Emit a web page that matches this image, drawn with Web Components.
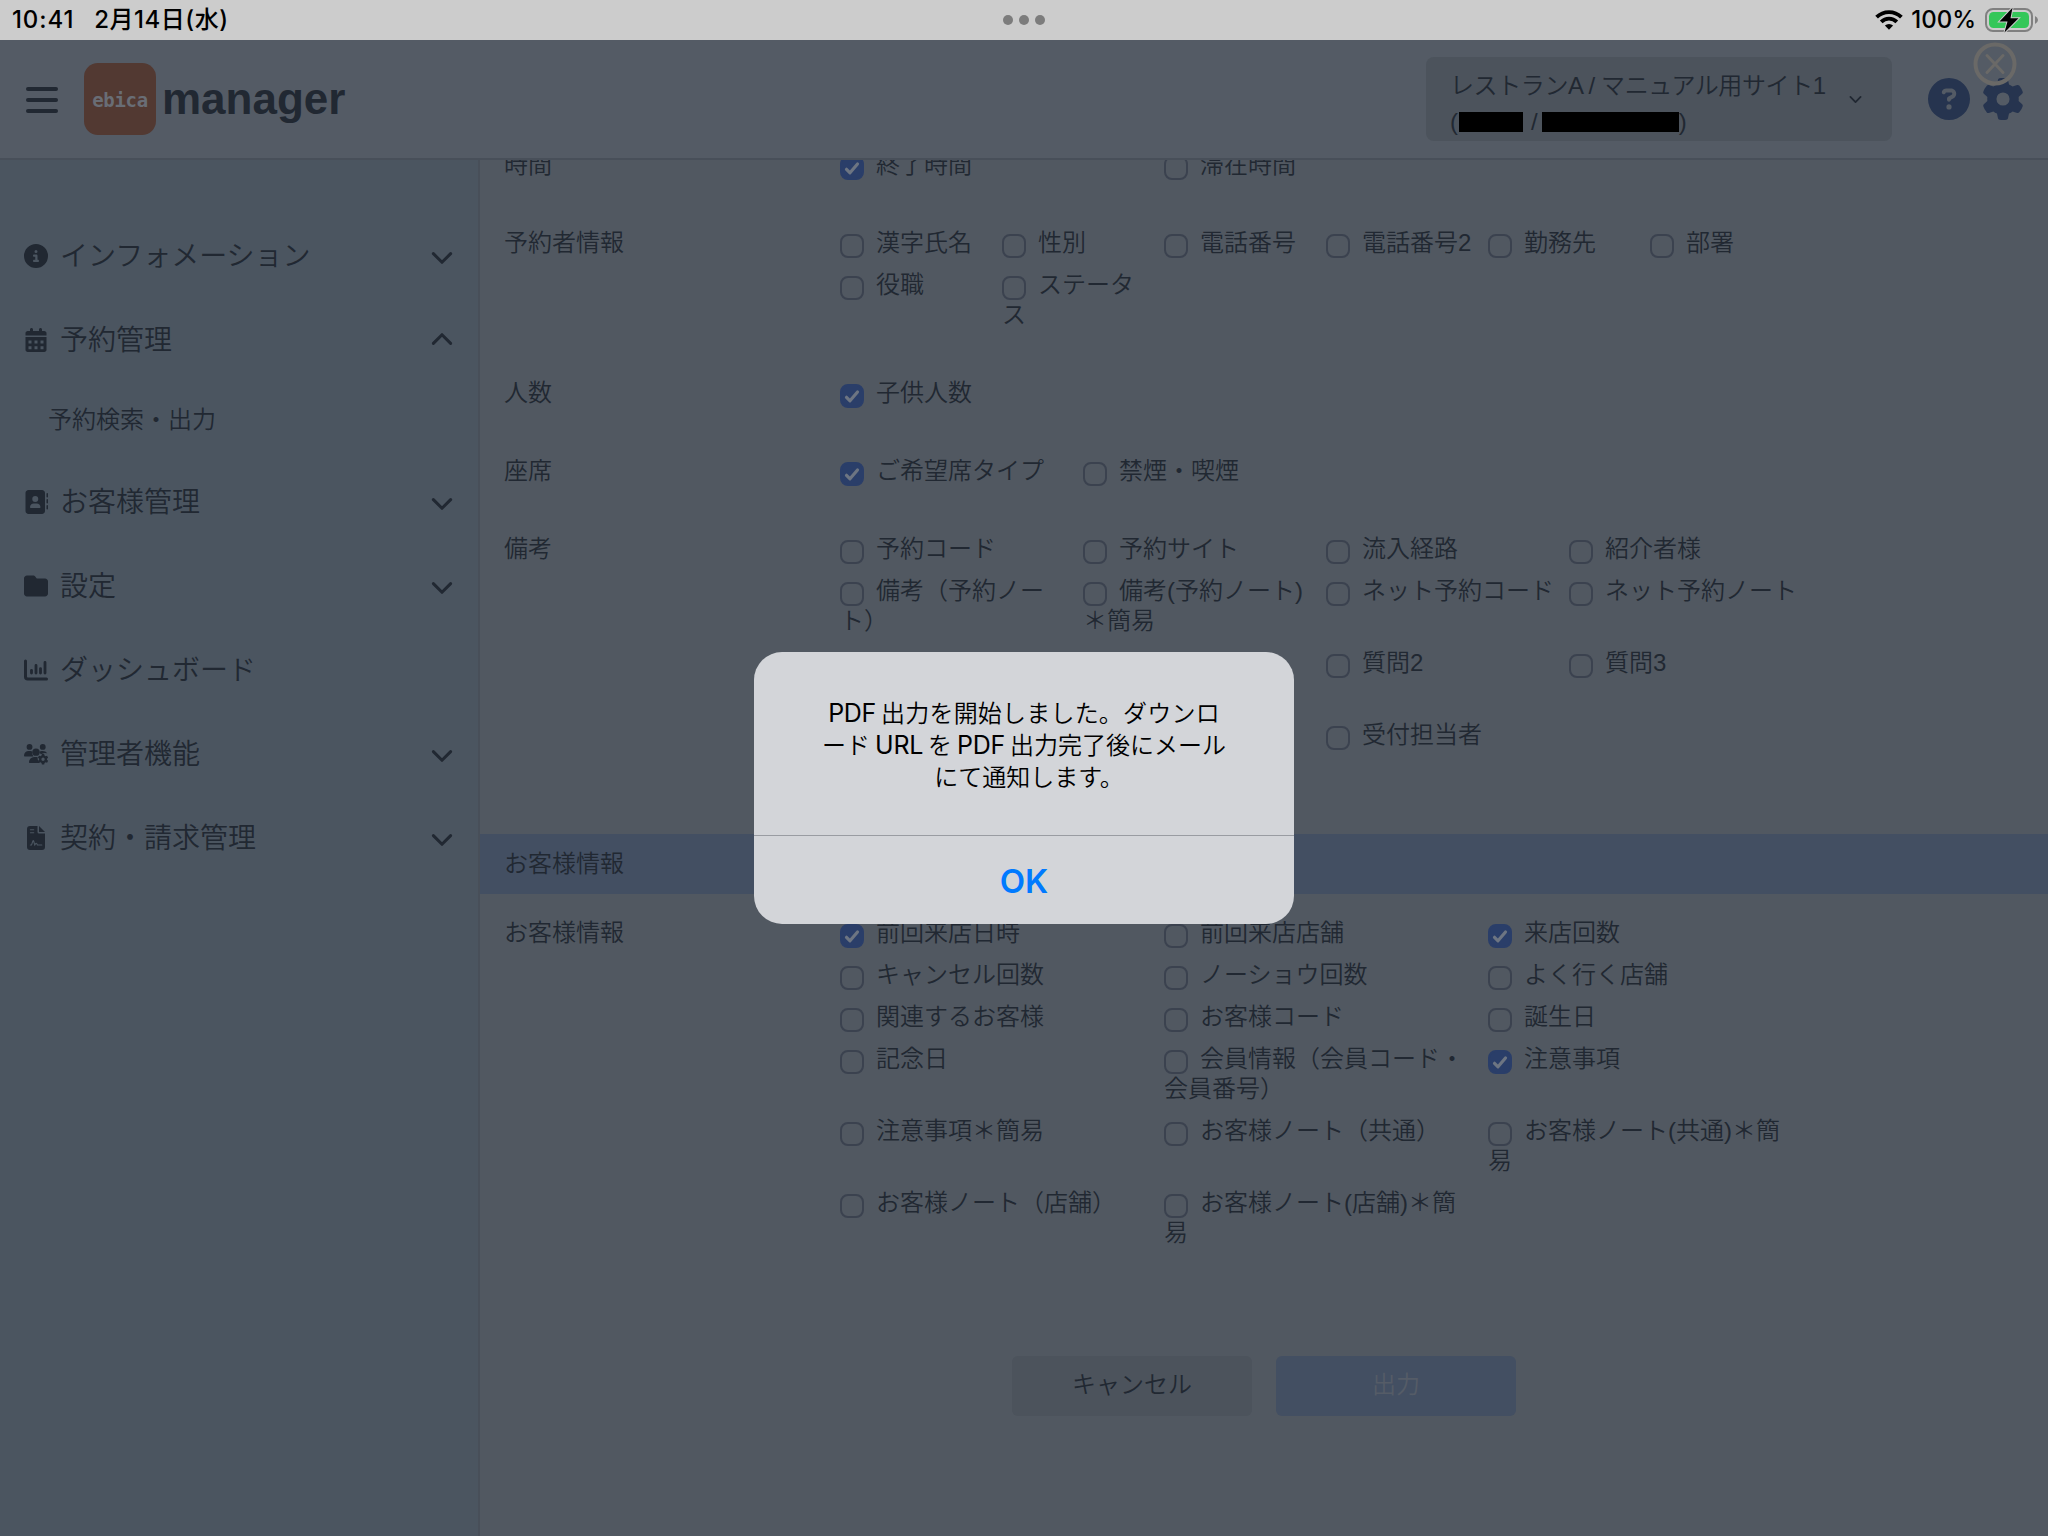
<!DOCTYPE html>
<html lang="ja">
<head>
<meta charset="UTF-8">
<title>ebica manager</title>
<style>
    body {
        margin: 0;
        width: 2048px;
        height: 1536px;
        overflow: hidden;
        background: #515861;
        color: #212832;
        font-family: "Liberation Sans", "Noto Sans CJK JP", sans-serif;
        font-size: 24px;
        font-weight: 350;
        text-spacing-trim: space-all;
    }
    /* latin words in the alert, with a small gap around them */
    alert-dialog b {
        margin: 0 5px;
        font-size: 25px;
        font-weight: 420;
        line-height: 1;
        letter-spacing: -0.3px;
    }
    alert-dialog b.start {
        margin-left: 0;
    }
</style>
</head>
<body>
<app-page>
    <status-bar slot="status"></status-bar>
    <app-header slot="header"></app-header>
    <side-nav slot="nav"></side-nav>
    <output-form slot="main"></output-form>
    <alert-dialog slot="dialog">
        <span style="letter-spacing: 0.2px"><b class="start">PDF</b>出力を開始しました。ダウンロ</span><br>
        <span>ード<b>URL</b>を<b>PDF</b>出力完了後にメール</span><br>
        <span style="padding-left: 10px">にて通知します。</span>
    </alert-dialog>
</app-page>

<script>
const ICONS = {
    info: '<path fill-rule="evenodd" d="M256 0a256 256 0 1 0 0 512 256 256 0 1 0 0-512zM216 336h24V272H216c-13.3 0-24-10.7-24-24s10.7-24 24-24h48c13.3 0 24 10.7 24 24v88h8c13.3 0 24 10.7 24 24s-10.7 24-24 24H216c-13.3 0-24-10.7-24-24s10.7-24 24-24zm40-208a32 32 0 1 1 0 64 32 32 0 1 1 0-64z"/>',
    question: '<path fill-rule="evenodd" d="M256 0a256 256 0 1 0 0 512 256 256 0 1 0 0-512zM169.8 165.3c7.9-22.3 29.1-37.3 52.8-37.3h58.3c34.9 0 63.1 28.3 63.1 63.1c0 22.6-12.1 43.5-31.7 54.8L280 264.4c-.2 13-10.9 23.6-24 23.6c-13.3 0-24-10.7-24-24V250.5c0-8.6 4.6-16.5 12.1-20.8l44.3-25.4c4.7-2.7 7.6-7.7 7.6-13.1c0-8.4-6.8-15.1-15.1-15.1H222.6c-3.4 0-6.4 2.1-7.5 5.3l-.4 1.2c-4.4 12.5-18.2 19-30.6 14.6s-19-18.2-14.6-30.6l.4-1.2zM224 352a32 32 0 1 1 64 0 32 32 0 1 1 -64 0z"/>',
    gear: '<path fill-rule="evenodd" d="M495.9 166.6c3.2 8.7 .5 18.4-6.4 24.6l-43.3 39.4c1.1 8.3 1.7 16.8 1.7 25.4s-.6 17.1-1.7 25.4l43.3 39.4c6.9 6.2 9.6 15.9 6.4 24.6c-4.4 11.9-9.7 23.3-15.8 34.3l-4.7 8.1c-6.6 11-14 21.4-22.1 31.2c-5.9 7.2-15.7 9.6-24.5 6.8l-55.7-17.7c-13.4 10.3-28.2 18.9-44 25.4l-12.5 57.1c-2 9.1-9 16.3-18.2 17.8c-13.8 2.3-28 3.5-42.5 3.5s-28.7-1.2-42.5-3.5c-9.2-1.5-16.2-8.7-18.2-17.8l-12.5-57.1c-15.8-6.5-30.6-15.1-44-25.4L83.1 425.9c-8.8 2.8-18.6 .3-24.5-6.8c-8.1-9.8-15.5-20.2-22.1-31.2l-4.7-8.1c-6.1-11-11.4-22.4-15.8-34.3c-3.2-8.7-.5-18.4 6.4-24.6l43.3-39.4C64.6 273.1 64 264.6 64 256s.6-17.1 1.7-25.4L22.4 191.2c-6.9-6.2-9.6-15.9-6.4-24.6c4.4-11.9 9.7-23.3 15.8-34.3l4.7-8.1c6.6-11 14-21.4 22.1-31.2c5.9-7.2 15.7-9.6 24.5-6.8l55.7 17.7c13.4-10.3 28.2-18.9 44-25.4l12.5-57.1c2-9.1 9-16.3 18.2-17.8C227.3 1.2 241.5 0 256 0s28.7 1.2 42.5 3.5c9.2 1.5 16.2 8.7 18.2 17.8l12.5 57.1c15.8 6.5 30.6 15.1 44 25.4l55.7-17.7c8.8-2.8 18.6-.3 24.5 6.8c8.1 9.8 15.5 20.2 22.1 31.2l4.7 8.1c6.1 11 11.4 22.4 15.8 34.3zM256 336a80 80 0 1 0 0-160 80 80 0 1 0 0 160z"/>',
    calendar: '<path fill-rule="evenodd" transform="translate(32 0)" d="M128 0c17.7 0 32 14.3 32 32V64H288V32c0-17.7 14.3-32 32-32s32 14.3 32 32V64h48c26.5 0 48 21.5 48 48v48H0V112C0 85.5 21.5 64 48 64H96V32c0-17.7 14.3-32 32-32zM0 192H448V464c0 26.5-21.5 48-48 48H48c-26.5 0-48-21.5-48-48zM64 264h64v64H64zm128 0h64v64h-64zm128 0h64v64h-64zM64 388h64v64H64zm128 0h64v64h-64zm128 0h64v64h-64z"/>',
    contact: '<path fill-rule="evenodd" d="M96 0C60.7 0 32 28.7 32 64V448c0 35.3 28.7 64 64 64H384c35.3 0 64-28.7 64-64V64c0-35.3-28.7-64-64-64H96zM208 288h64c44.2 0 80 35.8 80 80c0 8.8-7.2 16-16 16H144c-8.8 0-16-7.2-16-16c0-44.2 35.8-80 80-80zm-32-96a64 64 0 1 1 128 0 64 64 0 1 1 -128 0zM512 80c0-8.8-7.2-16-16-16s-16 7.2-16 16v64c0 8.8 7.2 16 16 16s16-7.2 16-16V80zM496 192c-8.8 0-16 7.2-16 16v64c0 8.8 7.2 16 16 16s16-7.2 16-16V208c0-8.8-7.2-16-16-16zm16 144c0-8.8-7.2-16-16-16s-16 7.2-16 16v64c0 8.8 7.2 16 16 16s16-7.2 16-16V336z"/>',
    folder: '<path d="M64 480H448c35.3 0 64-28.7 64-64V160c0-35.3-28.7-64-64-64H288c-10.1 0-19.6-4.7-25.6-12.8L243.2 57.6C231.1 41.5 212.1 32 192 32H64C28.7 32 0 60.7 0 96V416c0 35.3 28.7 64 64 64z"/>',
    chart: '<g fill="none" stroke="currentColor" stroke-width="64" stroke-linecap="round"><path d="M32 64V400a48 48 0 0 0 48 48H480"/><path stroke-width="60" d="M160 262v60M256 158v164M352 226v96M448 94v228"/></g>',
    users: '<circle cx="118" cy="104" r="62"/><circle cx="400" cy="104" r="62"/><path d="M0 292a100 100 0 0 1 100-100h40q22 0 40 9a118 118 0 0 0 20 107H16q-16 0-16-16z"/><circle cx="256" cy="216" r="78"/><path d="M106 432a112 112 0 0 1 112-112h70q-6 70 44 128H122q-16 0-16-16z"/><path d="M330 200q26-10 60-8 70-2 108 46l-60-4-66 20q-28 0-32-14z"/><path fill-rule="evenodd" d="M382 258h48l8 32 22 12 32-10 22 40-24 24v24l24 24-22 40-32-10-22 12-8 34h-48l-8-34-22-12-32 10-22-40 24-24v-24l-24-24 22-40 32 10 22-12zM406 332a36 36 0 1 0 0 72 36 36 0 1 0 0-72z"/>',
    file: '<path d="M128 0H288V128a32 32 0 0 0 32 32H448V448a64 64 0 0 1-64 64H128a64 64 0 0 1-64-64V64A64 64 0 0 1 128 0z"/><path d="M320 0 448 128H320z"/><path fill="none" stroke="#4b5560" stroke-width="24" stroke-linecap="round" d="M136 80h72M136 144h72M136 404h24l30-84q8-16 16 0l24 84 18-26q14-18 26 0l12 26h94"/>',
    down: '<path fill="none" stroke="currentColor" stroke-width="70" stroke-linecap="round" stroke-linejoin="round" d="M55 155 256 356 457 155"/>',
    up: '<path fill="none" stroke="currentColor" stroke-width="70" stroke-linecap="round" stroke-linejoin="round" d="M55 357 256 156 457 357"/>'
}

// Base class: every component renders its own template into an open shadow root
class BaseElement extends HTMLElement {
    constructor() {
        super();
        this.attachShadow({ mode: 'open' });
    }
    connectedCallback() {
        this.shadowRoot.innerHTML = this.render();
    }
}

class SvgIcon extends BaseElement {
    render() {
        return `
            <style>
                :host { display: block; width: 24px; height: 24px; flex: none; }
                svg { display: block; width: 100%; height: 100%; fill: currentColor; }
            </style>
            <svg viewBox="0 0 512 512">${ICONS[this.getAttribute('name')]}</svg>
        `;
    }
}
customElements.define('svg-icon', SvgIcon)

class AppPage extends BaseElement {
    render() {
        return `
            <style>
                :host {
                    display: grid;
                    grid-template: 40px 120px 1376px / 480px 1fr;
                    width: 2048px;
                    height: 1536px;
                }
                .wide { grid-column: 1 / 3; }
                .overlay {
                    position: absolute;
                    inset: 40px 0 0 0;
                    display: grid;
                    place-items: center;
                }
            </style>
            <div class="wide"><slot name="status"></slot></div>
            <div class="wide"><slot name="header"></slot></div>
            <slot name="nav"></slot>
            <slot name="main"></slot>
            <div class="overlay"><slot name="dialog"></slot></div>
        `;
    }
}
customElements.define('app-page', AppPage)

class StatusBar extends BaseElement {
    render() {
        return `
            <style>
                :host {
                    display: grid;
                    grid-template-columns: 1fr auto 1fr;
                    align-items: center;
                    height: 40px;
                    box-sizing: border-box;
                    padding: 0 9px 0 12px;
                    background: #cccccc;
                    color: #000;
                    font: 500 24px/40px Inter, "Noto Sans CJK JP", sans-serif;
                }
                .left { display: flex; gap: 20px; }
                .time { letter-spacing: 0.9px; }
                .date { letter-spacing: 0.5px; }
                .dots { display: flex; gap: 6px; margin-right: 3px; }
                .dots b { width: 10px; height: 10px; border-radius: 50%; background: #7c7c7c; }
                .right { display: flex; justify-content: flex-end; align-items: center; }
                .percent { margin: 0 9px 0 8px; }
                svg { display: block; }
            </style>
            <div class="left"><span class="time">10:41</span><span class="date">2月14日(水)</span></div>
            <div class="dots"><b></b><b></b><b></b></div>
            <div class="right">
                <svg width="28" height="20" viewBox="0 0 28 20">
                    <g fill="none" stroke="#000" stroke-width="3.8">
                        <path d="M1.6 7.2a17.6 17.6 0 0 1 24.8 0"/>
                        <path d="M6.2 11.8a11 11 0 0 1 15.6 0"/>
                    </g>
                    <path d="M14 19.8 9.9 15.6a5.8 5.8 0 0 1 8.2 0z"/>
                </svg>
                <span class="percent">100%</span>
                <svg width="54" height="26" viewBox="0 0 54 26">
                    <rect x="1" y="2" width="46" height="22" rx="7" fill="none" stroke="#808080" stroke-width="2"/>
                    <rect x="4" y="5" width="40" height="16" rx="4.5" fill="#34c759"/>
                    <path d="M50 9q3 1.500 3 4t-3 4z" fill="#808080"/>
                    <path d="M27.500 .8 14.500 14.500h8L19.500 25.500 33.500 11.300h-8z" fill="#000" stroke="#ccc" stroke-width="2" paint-order="stroke"/>
                </svg>
            </div>
        `;
    }
}
customElements.define('status-bar', StatusBar)

class AppHeader extends BaseElement {
    render() {
        return `
            <style>
                :host {
                    display: flex;
                    align-items: center;
                    height: 120px;
                    box-sizing: border-box;
                    padding: 0 24px 0 26px;
                    border-bottom: 2px solid #484f59;
                    background: #545b65;
                }
                .menu { display: grid; gap: 7px; width: 32px; margin: 2px 26px 0 0; }
                .menu b { height: 4px; border-radius: 2px; background: #212832; }
                .logo {
                    width: 72px;
                    height: 72px;
                    border-radius: 14px;
                    background: #523932;
                    color: #696d75;
                    font: bold 19px/74px "DejaVu Sans Mono", monospace;
                    letter-spacing: -0.3px;
                    text-align: center;
                }
                .name { margin: -1px auto 0 6px; font: bold 44px/60px "Liberation Sans", sans-serif; }
                .site {
                    display: flex;
                    align-items: center;
                    justify-content: space-between;
                    width: 466px;
                    height: 84px;
                    box-sizing: border-box;
                    padding: 0 30px 0 24px;
                    border-radius: 8px;
                    background: #4c535c;
                    line-height: 36px;
                    white-space: nowrap;
                }
                .first { letter-spacing: -0.4px; padding-top: 10px; }
                .second { display: flex; align-items: center; }
                .mask { height: 20px; background: #000; }
                .site svg-icon { width: 13px; height: 13px; }
                .tools { display: flex; gap: 12px; margin-left: 36px; color: #26344f; }
                .tools svg-icon { width: 42px; height: 42px; }
                .close {
                    position: absolute;
                    left: 1973px;
                    top: 42px;
                }
            </style>
            <div class="menu"><b></b><b></b><b></b></div>
            <div class="logo">ebica</div>
            <div class="name">manager</div>
            <div class="site">
                <div>
                    <div class="first">レストランA / マニュアル用サイト1</div>
                    <div class="second">(<span class="mask" style="width:64px;margin:0 8px 0 1px"></span>/<span class="mask" style="width:137px;margin-left:4px"></span>)</div>
                </div>
                <svg-icon name="down"></svg-icon>
            </div>
            <div class="tools">
                <svg-icon name="question"></svg-icon>
                <svg-icon name="gear"></svg-icon>
            </div>
            <svg class="close" width="44" height="44" viewBox="0 0 44 44" fill="none" stroke="#6a6967" stroke-width="4">
                <circle cx="22" cy="22" r="19.500"/>
                <path d="M14 13.500 30 30.500M30 13.500 14 30.500" stroke-linecap="round" stroke-width="3"/>
            </svg>
        `;
    }
}
customElements.define('app-header', AppHeader)

class NavItem extends BaseElement {
    render() {
        const arrow = this.getAttribute('arrow');
        return `
            <style>
                :host {
                    display: flex;
                    align-items: center;
                    height: 84px;
                    padding: 0 25px 0 24px;
                    font-size: 28px;
                }
                span { flex: 1; margin-left: 12px; padding-bottom: 4px; }
                .arrow { width: 22px; height: 22px; margin-top: 3px; }
                .arrow[name="up"] { margin-top: -2px; }
            </style>
            <svg-icon name="${this.getAttribute('icon')}"></svg-icon>
            <span><slot></slot></span>
            ${arrow ? `<svg-icon class="arrow" name="${arrow}"></svg-icon>` : ''}
        `;
    }
}
customElements.define('nav-item', NavItem)

class SideNav extends BaseElement {
    render() {
        return `
            <style>
                :host {
                    display: block;
                    height: 1376px;
                    box-sizing: border-box;
                    padding-top: 54px;
                    border-right: 2px solid #484f59;
                    background: #4b5560;
                }
                .sub { height: 78px; padding-left: 48px; line-height: 76px; }
            </style>
            <nav-item icon="info" arrow="down">インフォメーション</nav-item>
            <nav-item icon="calendar" arrow="up">予約管理</nav-item>
            <div class="sub">予約検索・出力</div>
            <nav-item icon="contact" arrow="down">お客様管理</nav-item>
            <nav-item icon="folder" arrow="down">設定</nav-item>
            <nav-item icon="chart">ダッシュボード</nav-item>
            <nav-item icon="users" arrow="down">管理者機能</nav-item>
            <nav-item icon="file" arrow="down">契約・請求管理</nav-item>
        `;
    }
}
customElements.define('side-nav', SideNav)

class CheckItem extends BaseElement {
    render() {
        return `
            <style>
                :host { display: block; padding: 0 12px 12px 0; line-height: 30px; }
                .box {
                    display: inline-block;
                    width: 24px;
                    height: 24px;
                    box-sizing: border-box;
                    margin: 0 12px -7px 0;
                    border: 2px solid #3b424f;
                    border-radius: 8px;
                    vertical-align: baseline;
                }
                svg { display: none; margin: -2px; }
                :host([checked]) .box { background: #2a3e69; border-color: #2a3e69; }
                :host([checked]) svg { display: block; }
            </style>
            <span class="box"><svg width="24" height="24" viewBox="0 0 24 24" fill="none" stroke="#6d7582" stroke-width="3.200" stroke-linecap="round" stroke-linejoin="round"><path d="M6.500 13.300 10 16.800 17.500 8"/></svg></span><slot></slot>
        `;
    }
}
customElements.define('check-item', CheckItem)

class CheckRow extends BaseElement {
    render() {
        return `
            <style>
                :host { display: grid; grid-template-columns: 336px 972px; padding-left: 24px; margin-bottom: 36px; line-height: 30px; }
                .items { display: grid; grid-template-columns: repeat(${this.getAttribute('cols')}, 1fr); }
            </style>
            <div>${this.getAttribute('label')}</div>
            <div class="items"><slot></slot></div>
        `;
    }
}
customElements.define('check-row', CheckRow)

class AppButton extends BaseElement {
    render() {
        return `
            <style>
                :host { display: block; width: 240px; height: 60px; border-radius: 6px; background: #4c535c; line-height: 58px; text-align: center; }
                :host([primary]) { background: #434f62; color: #555c67; }
            </style>
            <slot></slot>
        `;
    }
}
customElements.define('app-button', AppButton)

class OutputForm extends BaseElement {
    constructor() {
        super();
        // A leading * marks a checked option, null leaves the cell empty
        this.reserva = [
            { label: '時間', cols: 3, items: ['*終了時間', '滞在時間'] },
            { label: '予約者情報', cols: 6, items: ['漢字氏名', '性別', '電話番号', '電話番号2', '勤務先', '部署', '役職', 'ステータス'] },
            { label: '人数', cols: 4, items: ['*子供人数'] },
            { label: '座席', cols: 4, items: ['*ご希望席タイプ', '禁煙・喫煙'] },
            { label: '備考', cols: 4, items: ['予約コード', '予約サイト', '流入経路', '紹介者様', '備考（予約ノート）', '備考(予約ノート)＊簡易', 'ネット予約コード', 'ネット予約ノート', null, null, '質問2', '質問3', null, null, '受付担当者'] },
        ];
        this.cliente = [
            { label: 'お客様情報', cols: 3, items: ['*前回来店日時', '前回来店店舗', '*来店回数', 'キャンセル回数', 'ノーショウ回数', 'よく行く店舗', '関連するお客様', 'お客様コード', '誕生日', '記念日', '会員情報（会員コード・会員番号）', '*注意事項', '注意事項＊簡易', 'お客様ノート（共通）', 'お客様ノート(共通)＊簡易', 'お客様ノート（店舗）', 'お客様ノート(店舗)＊簡易'] },
        ];
    }

    rows(list) {
        return list.map(row => `
            <check-row label="${row.label}" cols="${row.cols}">
                ${row.items.map(item => {
                    if (item === null) return '<div class="empty"></div>';
                    const checked = item.startsWith('*');
                    return `<check-item ${checked ? 'checked' : ''}>${checked ? item.slice(1) : item}</check-item>`;
                }).join('')}
            </check-row>
        `).join('');
    }

    render() {
        return `
            <style>
                :host { display: block; height: 1376px; overflow: hidden; }
                .scroll { margin-top: -10px; }
                .empty { height: 72px; }
                .band { height: 60px; margin: 42px 0 24px; padding-left: 24px; background: #434f62; line-height: 59px; }
                .buttons { display: flex; justify-content: center; gap: 24px; margin-top: 96px; }
                check-row:last-of-type { margin-bottom: 0; }
            </style>
            <div class="scroll">
                <div>${this.rows(this.reserva)}</div>
                <div class="band">お客様情報</div>
                ${this.rows(this.cliente)}
                <div class="buttons">
                    <app-button>キャンセル</app-button>
                    <app-button primary>出力</app-button>
                </div>
            </div>
        `;
    }
}
customElements.define('output-form', OutputForm)

class AlertDialog extends BaseElement {
    render() {
        return `
            <style>
                :host {
                    display: flex;
                    flex-direction: column;
                    width: 540px;
                    height: 272px;
                    border-radius: 28px;
                    background: #d3d5d9;
                    color: #000;
                    text-align: center;
                    overflow: hidden;
                    font-family: Inter, "Noto Sans CJK JP", sans-serif;
                }
                .message { flex: none; height: 183px; box-sizing: border-box; padding-top: 46px; line-height: 32px; white-space: nowrap; }
                .ok { flex: none; border-top: 1px solid #999ca2; color: #007aff; font-size: 33px; font-weight: 600; line-height: 91px; }
            </style>
            <div class="message"><slot></slot></div>
            <div class="ok">OK</div>
        `;
    }
}
customElements.define('alert-dialog', AlertDialog)
</script>
</body>
</html>
